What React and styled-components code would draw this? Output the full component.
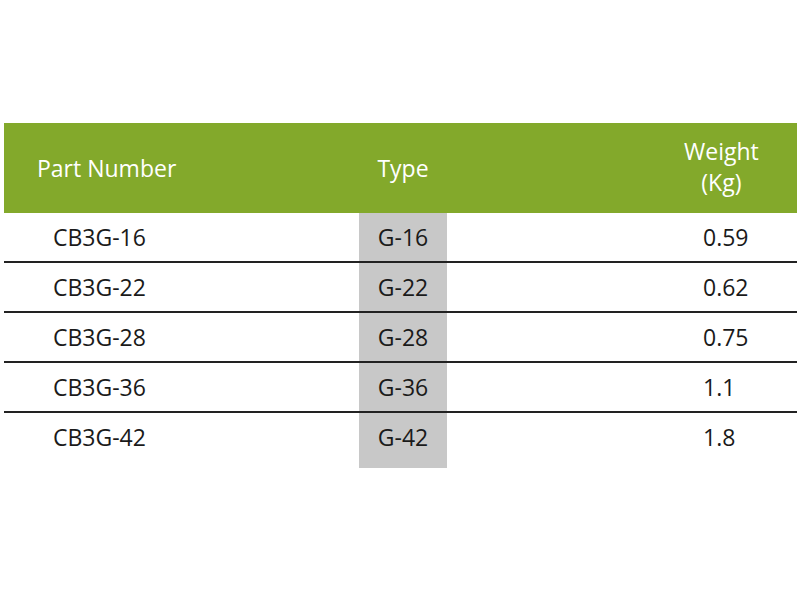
import React from 'react';
import styled, { createGlobalStyle } from 'styled-components';

const Global = createGlobalStyle`
  body {
    margin: 0;
    background: #ffffff;
    font-family: "Open Sans", "Noto Sans", sans-serif;
  }
`;

const Page = styled.div`
  width: 800px;
  height: 600px;
  padding: 123px 3px 0 4px;
  box-sizing: border-box;
`;

const Table = styled.div`
  display: grid;
  grid-template-columns: 355px 88px 1fr;
`;

const HeadCell = styled.div`
  background: #83a92b;
  color: #ffffff;
  height: 90px;
  display: flex;
  align-items: center;
  justify-content: ${p => p.align || 'center'};
  padding-left: ${p => p.indent || 0}px;
  font-size: 23px;
  line-height: 28px;
  text-align: center;
`;

const Stack = styled.div`
  display: flex;
  flex-direction: column;
  align-items: center;
  line-height: 31.5px;
  margin-top: -2px;
`;

const Cell = styled.div`
  height: 48px;
  padding-bottom: ${p => (p.last ? 7 : 0)}px;
  box-sizing: content-box;
  display: flex;
  align-items: center;
  justify-content: ${p => p.align || 'flex-start'};
  padding-left: ${p => p.indent || 0}px;
  background: ${p => (p.shade ? '#c8c8c8' : 'transparent')};
  border-bottom: ${p => (p.last ? 'none' : '2px solid #222222')};
  color: #1a1a1a;
  font-size: 23px;
`;

const rows = [
  ['CB3G-16', 'G-16', '0.59'],
  ['CB3G-22', 'G-22', '0.62'],
  ['CB3G-28', 'G-28', '0.75'],
  ['CB3G-36', 'G-36', '1.1'],
  ['CB3G-42', 'G-42', '1.8'],
];

const App = () => {
  return (
    <Page>
      <Global />
      <Table>
        <HeadCell align="flex-start" indent={33}>Part Number</HeadCell>
        <HeadCell>Type</HeadCell>
        <HeadCell align="flex-start" indent={237}>
          <Stack>
            <span>Weight</span>
            <span>(Kg)</span>
          </Stack>
        </HeadCell>
        {rows.map((r, i) => {
          const last = i === rows.length - 1;
          return (
            <React.Fragment key={r[0]}>
              <Cell last={last} indent={49}>{r[0]}</Cell>
              <Cell last={last} shade align="center">{r[1]}</Cell>
              <Cell last={last} indent={256}>{r[2]}</Cell>
            </React.Fragment>
          );
        })}
      </Table>
    </Page>
  );
};

export default App;
